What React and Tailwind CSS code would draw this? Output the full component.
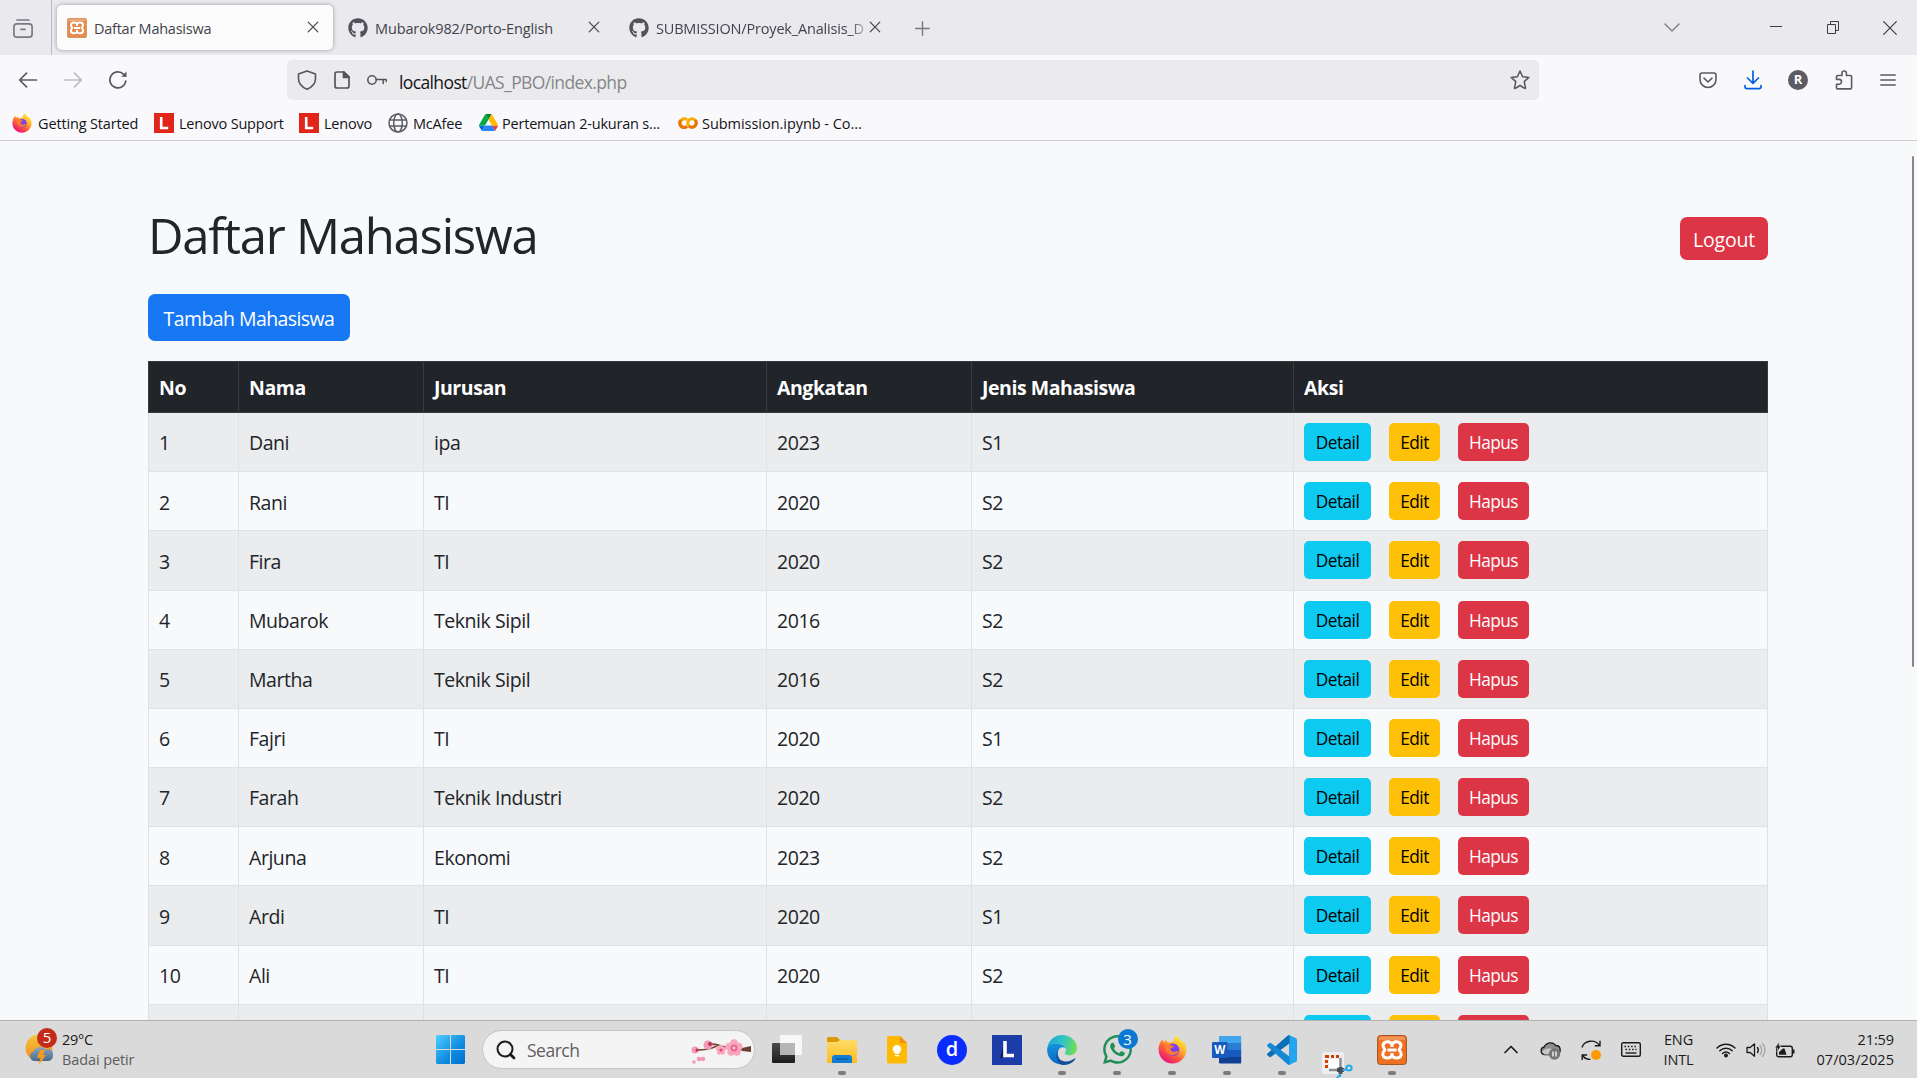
import React from "react";
import { FaGithub, FaWhatsapp } from "react-icons/fa";

const rows = [
  ["1", "Dani", "ipa", "2023", "S1"],
  ["2", "Rani", "TI", "2020", "S2"],
  ["3", "Fira", "TI", "2020", "S2"],
  ["4", "Mubarok", "Teknik Sipil", "2016", "S2"],
  ["5", "Martha", "Teknik Sipil", "2016", "S2"],
  ["6", "Fajri", "TI", "2020", "S1"],
  ["7", "Farah", "Teknik Industri", "2020", "S2"],
  ["8", "Arjuna", "Ekonomi", "2023", "S2"],
  ["9", "Ardi", "TI", "2020", "S1"],
  ["10", "Ali", "TI", "2020", "S2"],
  ["", "", "", "", ""],
];

const Line = ({ w = 20, h = 20, sw = 1.5, className = "", children }) => (
  <svg width={w} height={h} viewBox={`0 0 ${w} ${h}`} fill="none" stroke="currentColor" strokeWidth={sw} strokeLinecap="round" strokeLinejoin="round" className={`shrink-0 ${className}`}>
    {children}
  </svg>
);

const CloseX = ({ className = "" }) => (
  <Line w={12} h={12} sw={1.2} className={className}><path d="M1.200 1.200l9.600 9.600M10.800 1.200L1.200 10.800" /></Line>
);

function Xampp({ size, soft }) {
  return (
    <svg width={size} height={size} viewBox="0 0 30 30" className="shrink-0">
      <rect x=".5" y=".5" width="29" height="29" rx="3" fill={soft ? "#e58b4e" : "#ee7023"} stroke={soft ? "#c9854f" : "#a8541d"} />
      <rect x="2" y="1.5" width="26" height="3.5" rx="1.5" fill="#fff" opacity=".25" />
      <path d="M15 9.500C13.600 5.600 6.200 6 6 10.600c0 2 .9 3 2 4.200-1.300 1.200-2.200 2.400-2.200 4.400.2 4.800 7.800 5 9.200 1 1.400 4 9 3.800 9.200-1 0-2-.9-3.200-2.200-4.400 1.100-1.200 2-2.200 2-4.200-.2-4.600-7.600-5-9-1.100z" fill="none" stroke="#fff" strokeWidth="3" strokeLinejoin="round" />
      <path d="M10.500 14.900h9M15 9.500v2.500M15 18v2.500" stroke="#fff" strokeWidth="3" />
    </svg>
  );
}

function Firefox({ size, id }) {
  return (
    <svg width={size} height={size} viewBox="0 0 28 28" className="shrink-0">
      <defs>
        <linearGradient id={id} x1=".85" y1=".1" x2=".25" y2=".95">
          <stop offset="0" stopColor="#fff044" /><stop offset=".35" stopColor="#ffb02a" /><stop offset=".65" stopColor="#ff5a3c" /><stop offset="1" stopColor="#e8107c" />
        </linearGradient>
      </defs>
      <path d="M26.500 9.500c-.6-1.700-1.900-3.300-3-3.900.6 1.200.9 2.200 1 3C23.200 5 19.700 3.700 18.400.2c-2.600 1.700-3.500 4.500-3.600 6-1.300.1-2.500.5-3.500 1.100-2-.2-3-.8-3.500-2.500-.9.500-1.600 1.200-2 2-.9-.8-1.300-1.900-1.300-3C2.300 5.800.6 10 .6 14.300.6 21.600 6.600 27.600 14 27.600c7.400 0 13.400-6 13.400-13.300 0-1.700-.3-3.300-.9-4.800z" fill={`url(#${id})`} />
      <circle cx="14.500" cy="14.300" r="6" fill="#7a3ff0" />
      <path d="M6.500 9.500c2-.8 4.500-.6 6 .6 1.200.3 2.400.2 3.400.4-.6 1.600-3 1.600-3.600 2.400-.6 1.700.6 3 2.500 3.400 2 .2 3-1.400 4.800-.5-1 2.600-3.300 3.900-6 3.700-4.200-.3-7.100-4.500-7.100-10z" fill="#ff7a2e" />
    </svg>
  );
}

function GoogleDrive() {
  return (
    <svg width="19" height="17" viewBox="0 0 87.300 78" className="shrink-0">
      <path d="M6.600 66.850l3.850 6.650c.8 1.400 1.950 2.500 3.300 3.300L27.500 53H0c0 1.550.4 3.100 1.200 4.500z" fill="#0066da" />
      <path d="M43.650 25L29.900 1.200c-1.350.8-2.500 1.900-3.300 3.300l-25.400 44A9 9 0 000 53h27.500z" fill="#00ac47" />
      <path d="M73.550 76.800c1.350-.8 2.500-1.900 3.300-3.300l1.600-2.750L86.100 57.500c.8-1.400 1.200-2.950 1.200-4.500H59.800l5.850 11.500z" fill="#ea4335" />
      <path d="M43.650 25L57.400 1.200C56.050.4 54.500 0 52.900 0H34.400c-1.600 0-3.150.45-4.500 1.200z" fill="#00832d" />
      <path d="M59.800 53H27.500L13.750 76.800c1.350.8 2.900 1.200 4.500 1.200h50.800c1.600 0 3.150-.45 4.500-1.200z" fill="#2684fc" />
      <path d="M73.400 26.500l-12.700-22c-.8-1.400-1.950-2.500-3.300-3.300L43.650 25l16.150 28h27.450c0-1.550-.4-3.100-1.200-4.500z" fill="#ffba00" />
    </svg>
  );
}

const LenovoMark = () => (
  <svg width="20" height="20" viewBox="0 0 20 20" className="shrink-0">
    <rect width="20" height="20" fill="#e1251b" />
    <path d="M7.200 4v11h7" fill="none" stroke="#fff" strokeWidth="2.600" />
  </svg>
);

function Tab({ icon, title, active, className, fade }) {
  return (
    <div className={`flex h-[45px] items-center pl-2.5 pr-3.5 ${active ? "rounded-[5px] bg-[#fbfbfb] shadow-[0_0_4px_rgba(0,0,0,0.35)]" : ""} ${className}`}>
      {icon}
      <span className={`mt-[3px] ml-[7px] flex-1 whitespace-nowrap text-[#43434c] ${fade ? "text-[14.500px] tracking-[-0.180px] [mask-image:linear-gradient(to_right,black_91%,transparent_101%)]" : active ? "text-[14.500px] tracking-[-0.250px]" : "text-[14.500px] tracking-[-0.130px]"}`}>{title}</span>
      <CloseX className="mb-0.5 text-[#43434c]" />
    </div>
  );
}

function BrowserChrome() {
  return (
    <header className="shrink-0">
      <div className="flex h-[55px] items-center bg-[#eae9ee]">
        <div className="flex h-full w-[52px] items-center justify-center border-r border-[#bdbcc4] pr-1.5">
          <Line className="mt-0.5 text-[#7a7982]" sw={1.7}>
            <path d="M4 1h12M.9 7.800c0-2 1-3 3-3h12.200c2 0 3 1 3 3v7.400c0 2-1 3-3 3H3.900c-2 0-3-1-3-3zM8 10.400h4" />
          </Line>
        </div>
        <div className="flex items-center pl-[5px]">
          <Tab active className="w-[276px]" title="Daftar Mahasiswa" icon={<Xampp size={20} soft />} />
          <Tab className="ml-[5px] w-[276px]" title="Mubarok982/Porto-English" icon={<FaGithub className="size-5 text-[#52525b]" />} />
          <Tab fade className="ml-[5px] w-[276px]" title="SUBMISSION/Proyek_Analisis_D" icon={<FaGithub className="size-5 shrink-0 text-[#52525b]" />} />
        </div>
        <Line w={15} h={15} sw={1.4} className="ml-[20px] mt-0.5 text-[#7a7982]"><path d="M7.500.7v13.600M.7 7.500h13.600" /></Line>
        <div className="mr-[20px] ml-auto flex items-center text-[#3c3c43]">
          <Line w={16} h={10} sw={1.5} className="mr-[90px] text-[#85848c]"><path d="M1 1l7 7 7-7" /></Line>
          <div className="mr-[45px] mb-[3px] h-px w-3 bg-[#3c3c43]" />
          <svg width="12" height="13" viewBox="0 0 12 13" fill="none" stroke="currentColor" className="mr-[44px]"><path d="M.5 3.500h8v9h-8zM3.500 3.500v-3h8v9h-3" /></svg>
          <Line w={14} h={14} sw={1.2}><path d="M.7.7l12.600 12.600M13.300.7L.7 13.300" /></Line>
        </div>
      </div>
      <div className="flex h-[50px] items-center bg-[#f9f9fb] text-[#5b5b66]">
        <Line w={20} h={16} sw={1.7} className="ml-[18px]"><path d="M18.500 8H2M8.500 1.200L1.700 8l6.800 6.800" /></Line>
        <Line w={20} h={16} sw={1.7} className="ml-[25px] text-[#bcbcc2]"><path d="M1.500 8H18M11.500 1.200L18.300 8l-6.800 6.800" /></Line>
        <Line w={20} h={20} sw={1.7} className="ml-[25px]"><path d="M17.800 11a8 8 0 11-2.300-6.800L17.500 6" /><path d="M18.500 1.500v5.300h-5.300z" fill="currentColor" stroke="none" /></Line>
        <div className="ml-[159px] flex h-10 w-[1252px] items-center rounded-[5px] bg-[#ebebed] pr-[9px] pl-[10px] text-[#54545c]">
          <Line w={20} h={20} sw={1.6}><path d="M10 .9L1.500 4v4.500C1.500 13.500 4.500 17 10 19.200c5.500-2.200 8.500-5.700 8.500-10.700V4z" /></Line>
          <Line w={16} h={18} sw={1.7} className="ml-[17px]"><path d="M10 1H3C1.600 1 1 1.600 1 3v12c0 1.400.6 2 2 2h10c1.400 0 2-.6 2-2V6z" /><path d="M9.500.8V6.500h6z" fill="currentColor" /></Line>
          <Line w={20} h={12} sw={1.5} className="ml-[17px]"><circle cx="5" cy="6" r="4.200" /><path d="M9.200 5.500H19.200v2M16.200 5.500v4" /></Line>
          <div className="mt-1 ml-3 text-[17.500px] tracking-[-0.620px] text-[#85858a]"><span className="text-[#15141a]">localhost</span>/UAS_PBO/index.php</div>
          <Line w={20} h={20} sw={1.5} className="ml-auto"><path d="M10 1l2.600 5.700 6.200.7-4.600 4.200 1.300 6.200c.1.600-.3.900-.8.600L10 15.500l-4.700 2.900c-.5.300-.9 0-.8-.6l1.300-6.200L1.200 7.400l6.200-.7z" /></Line>
        </div>
        <div className="mr-[21px] ml-auto flex items-center">
          <Line w={18} h={17} sw={1.6}><path d="M3 1h12c1.500 0 2 .5 2 2v4.500a8 8 0 01-16 0V3c0-1.500.5-2 2-2zM5 6.200l4 3.800 4-3.800" /></Line>
          <Line w={18} h={20} sw={1.7} className="ml-[27px] text-[#0061e0]"><path d="M9 1v12M3.500 8L9 13.300 14.500 8M1 15.500v1.200c0 1.300.7 1.900 1.900 1.900h12.200c1.200 0 1.900-.6 1.900-1.900v-1.200" /></Line>
          <div className="ml-[26px] flex size-5 items-center justify-center rounded-full bg-[#5b5b66] text-[13px] font-bold text-white">R</div>
          <Line w={18} h={20} sw={1.6} className="ml-[27px]"><path d="M1.500 8.500V6.700c0-.8.400-1.200 1.200-1.200H7V3.200a2.200 2.200 0 014.400 0v2.300h4c.8 0 1.200.4 1.200 1.200v11c0 .8-.4 1.200-1.200 1.200H2.700c-.8 0-1.200-.4-1.200-1.200v-3.500h2.600a2.400 2.400 0 100-4.800H1.500z" /></Line>
          <Line w={16} h={14} sw={1.6} className="ml-[27px]"><path d="M.8 2h14.400M.8 7h14.400M.8 12h14.400" /></Line>
        </div>
      </div>
      <div className="flex h-9 items-center border-b border-[#cccccf] bg-[#f9f9fb] pl-3 text-[14.500px] tracking-[-0.200px] whitespace-nowrap text-[#15141a]">
        <div className="flex w-[142px] items-center gap-1.5"><Firefox size={20} id="ffSmall" /><span className="mt-0.5 tracking-[-0.150px]">Getting Started</span></div>
        <div className="flex w-[145px] items-center gap-[5px]"><LenovoMark /><span className="mt-0.5">Lenovo Support</span></div>
        <div className="flex w-[89px] items-center gap-[5px]"><LenovoMark /><span className="mt-0.5">Lenovo</span></div>
        <div className="flex w-[91px] items-center gap-[5px]">
          <Line w={20} h={20} sw={1.5} className="text-[#5b5b66]"><circle cx="10" cy="10" r="9" /><ellipse cx="10" cy="10" rx="4.300" ry="9" /><path d="M1.500 7h17M1.500 13h17" /></Line>
          <span className="mt-0.5">McAfee</span>
        </div>
        <div className="flex w-[199px] items-center gap-1"><GoogleDrive /><span className="mt-0.5">Pertemuan 2-ukuran s...</span></div>
        <div className="flex items-center gap-1">
          <svg width="20" height="12" viewBox="0 0 20 12" fill="none" strokeWidth="3"><circle cx="14" cy="6" r="4.200" stroke="#f9ab00" /><path d="M9 2.600A4.200 4.200 0 109 9.400" stroke="#f9ab00" /><path d="M9 9.400A4.200 4.200 0 013 3" stroke="#e8710a" /><path d="M17 3a4.200 4.200 0 01-6 6" stroke="#e8710a" /></svg>
          <span className="mt-0.5 tracking-[-0.040px]">Submission.ipynb - Co...</span>
        </div>
      </div>
    </header>
  );
}

function StudentTable() {
  return (
    <div className="mt-5 w-[1620px] text-[19.500px] tracking-[-0.450px] text-[#212529]">
      <div className="grid h-[52px] grid-cols-[89px_185px_343px_205px_322px_474px] border border-[#373b3e] bg-[#212529] font-bold text-white">
        {["No", "Nama", "Jurusan", "Angkatan", "Jenis Mahasiswa", "Aksi"].map((h, i) => (
          <div key={h} className={`flex items-center pt-0.5 pl-2.5 ${i ? "border-l border-[#373b3e]" : ""}`}>{h}</div>
        ))}
      </div>
      {rows.map((r, i) => (
        <div key={i} className={`grid h-[59.180px] grid-cols-[90px_185px_343px_205px_322px_474px] border-r border-b border-[#dee2e6] ${i % 2 ? "" : "bg-[#ebeced]"}`}>
          {r.map((c, j) => (
            <div key={j} className="flex items-center border-l border-[#dee2e6] pt-0.5 pl-2.5">{c}</div>
          ))}
          <div className="flex items-start border-l border-[#dee2e6] pt-2.5 pl-2.5 text-[17.300px] tracking-[-0.550px]">
            <button className="h-[38px] w-[67px] rounded-[5px] bg-[#0dcaf0] pt-0.5 text-black">{r[0] && "Detail"}</button>
            <button className="ml-[18px] h-[38px] w-[51px] rounded-[5px] bg-[#ffc107] pt-0.5 text-black">{r[0] && "Edit"}</button>
            <button className="ml-[18px] h-[38px] w-[71px] rounded-[5px] bg-[#dc3545] pt-0.5 text-white">{r[0] && "Hapus"}</button>
          </div>
        </div>
      ))}
    </div>
  );
}

const Slot = ({ children, dot }) => (
  <div className="relative flex h-full w-[55px] items-center justify-center">
    {children}
    {dot && <div className="absolute bottom-[3px] h-1 w-2 rounded-full bg-[#7b7b7b]" />}
  </div>
);

function Blossom() {
  const petals = (cx, cy, r) => [0, 72, 144, 216, 288].map((a) => (
    <circle key={a} cx={cx + r * Math.sin((a * Math.PI) / 180)} cy={cy - r * Math.cos((a * Math.PI) / 180)} r={r * 0.75} />
  ));
  return (
    <svg width="62" height="26" viewBox="0 0 62 26" className="mt-1 shrink-0">
      <path d="M61 10c-8 2-14 0-22-1-8-1-10-4-18-4M27 7c-6 3-10 4-20 4" fill="none" stroke="#7a4a3c" strokeWidth="1.800" />
      <path d="M52 9l9-2v6l-9-1z" fill="#6b4034" />
      <g fill="#f8a5bd">{petals(44, 9, 5)}{petals(31, 11, 3)}</g>
      <g fill="#f39ab4"><circle cx="18" cy="6" r="4.500" /><circle cx="5" cy="11" r="3.500" /><circle cx="9" cy="20" r="2.300" /><circle cx="13" cy="20" r="2.300" /><circle cx="4" cy="23" r="1.800" /></g>
      <circle cx="20" cy="5" r="2" fill="#b5304f" /><circle cx="7" cy="11" r="1.500" fill="#b5304f" />
      <circle cx="44" cy="9" r="3.500" fill="#ec6b93" /><circle cx="31" cy="11" r="1.600" fill="#e8457a" /><circle cx="44" cy="9" r="1.200" fill="#fde" />
    </svg>
  );
}

function Taskbar() {
  return (
    <footer className="flex h-[58px] shrink-0 items-center border-t border-[#b1b2b4] bg-[#dadada] text-[14.500px] tracking-[-0.100px] text-[#1b1b1b]">
      <div className="flex w-[436px] items-center pl-[25px]">
        <svg width="34" height="38" viewBox="0 0 34 38" className="mb-1.5 shrink-0">
          <defs><linearGradient id="cloud" x2="0" y2="1"><stop stopColor="#8fa6bd" /><stop offset="1" stopColor="#48698c" /></linearGradient><linearGradient id="sun" x2="0" y2="1"><stop stopColor="#f5c63a" /><stop offset="1" stopColor="#ee8a28" /></linearGradient></defs>
          <circle cx="14" cy="20" r="13.500" fill="url(#sun)" />
          <path d="M9 33a5 5 0 01-.5-9.500c2-5 9-6 12-2 5-1.500 8 1.500 7.500 6 0 3-2 5.500-5 5.500z" fill="url(#cloud)" />
          <path d="M15 22h5l-2 5h3l-7 10 1.500-7H12z" fill="#f59a1d" />
          <circle cx="22" cy="10" r="10" fill="#c42b1c" />
          <text x="22" y="15.200" textAnchor="middle" fontSize="15" fill="#fff">5</text>
        </svg>
        <div className="ml-[3px] leading-5"><div className="tracking-[-0.300px]">29°C</div><div className="text-[#5c5c5c]">Badai petir</div></div>
      </div>
      <svg width="29" height="29" viewBox="0 0 29 29" className="shrink-0">
        <defs><linearGradient id="win" x1="0" y1="0" x2="1" y2="1"><stop stopColor="#4cd0ff" /><stop offset=".6" stopColor="#0f8ae0" /><stop offset="1" stopColor="#0070d0" /></linearGradient></defs>
        <path d="M1 0h13v14H0V1zM15 0h13l1 1v13H15zM0 15h14v14H1l-1-1zM15 15h14v13l-1 1H15z" fill="url(#win)" />
      </svg>
      <div className="ml-[17px] mr-[4.500px] flex h-[39px] w-[273px] shrink-0 items-center rounded-full border border-[#c4c4c4] bg-[#f4f4f4] pr-0.5 pl-[13px]">
        <Line w={20} h={20} sw={2}><circle cx="9" cy="9" r="7.500" /><path d="M14.500 14.500l3.500 3.500" strokeWidth="2.800" /></Line>
        <span className="mt-0.5 ml-[11px] flex-1 text-[17.500px] tracking-[-0.500px] text-[#5f5f5f]">Search</span>
        <Blossom />
      </div>
      <div className="flex h-full">
        <Slot>
          <svg width="31" height="29" viewBox="0 0 31 29"><defs><linearGradient id="tv" x2="0" y2="1"><stop stopColor="#4a4a4a" /><stop offset="1" stopColor="#1d1d1d" /></linearGradient></defs><rect y="8" width="23" height="20" rx="1" fill="url(#tv)" /><rect x="8" y="0" width="22" height="20" rx="1" fill="#f7f7f7" /><path d="M8 8h15v12H8z" fill="#b5b5b5" /></svg>
        </Slot>
        <Slot dot>
          <svg width="30" height="28" viewBox="0 0 30 28"><defs><linearGradient id="fold" x2="0" y2="1"><stop stopColor="#ffdc6b" /><stop offset="1" stopColor="#fdbb1c" /></linearGradient></defs><path d="M0 2Q0 1 1 1h9l3 3h16q1 0 1 1v5H0z" fill="#d99a07" /><path d="M0 6h10l3-2h16q1 0 1 1v21q0 1-1 1H1q-1 0-1-1z" fill="url(#fold)" /><path d="M5 27v-5q0-3 3-3h14q3 0 3 3v5z" fill="#117dd2" /><path d="M9 23h12" stroke="#064f8c" /></svg>
        </Slot>
        <Slot>
          <svg width="20" height="28" viewBox="0 0 20 28"><path d="M1.500 0H13l7 7v19q0 1.500-1.500 1.500h-17Q0 27.500 0 26V1.500Q0 0 1.500 0z" fill="#ffb900" /><path d="M13 0l7 7h-7z" fill="#f58f13" /><circle cx="10" cy="13.300" r="4.200" fill="#fff" /><path d="M8 15h4v3H8zM8 19h4v1.200H8z" fill="#fff" /></svg>
        </Slot>
        <Slot><div className="flex size-[30px] items-center justify-center rounded-full bg-[#0a2cff] pb-0.5 text-[20px] font-semibold text-white">d</div></Slot>
        <Slot>
          <svg width="30" height="30" viewBox="0 0 30 30"><rect width="30" height="30" fill="#1c3ca8" /><path d="M8 24l3-12v10z" fill="#0b1f57" /><path d="M13 6v14.500h9" fill="none" stroke="#fff" strokeWidth="3.600" /></svg>
        </Slot>
        <Slot dot>
          <svg width="30" height="30" viewBox="0 0 30 30">
            <defs>
              <linearGradient id="edTop" x1="0" x2="1" y1=".3" y2=".5"><stop stopColor="#1aa6e0" /><stop offset=".5" stopColor="#2fc6c6" /><stop offset="1" stopColor="#6fe052" /></linearGradient>
              <linearGradient id="edL" x2="0" y2="1"><stop stopColor="#1292d8" /><stop offset="1" stopColor="#0c6bc4" /></linearGradient>
            </defs>
            <path d="M.3 13.500C1 5.500 7.500 0 15 0c8.500 0 15 6 15 13 0 4.500-3.500 7.300-7.500 7.300-3.300 0-4.800-1.200-4.600-2.200.2-.8 1.100-1 1.100-3.100 0-4-4-6.500-9-6.500-4.500 0-8 2-9.700 5z" fill="url(#edTop)" />
            <path d="M.2 13.500C1.500 10 5 8.500 9.500 8.500c5 0 8.500 2.500 9.300 5-4-3-8 0-8 4.500 0 5 3.500 9.500 8.700 11.300C8.500 31.500-.8 24 .2 13.500z" fill="url(#edL)" />
            <path d="M12.500 13.500c-3.500 3-3.200 11.500 4.500 12.700 4.500.8 8-1 10.500-2.700.7-.5 1.200 0 .8.600-2.300 3.700-6.800 6-11.800 5.900C9 29.500 7 17 12.500 13.500z" fill="#124f96" />
          </svg>
        </Slot>
        <Slot dot>
          <FaWhatsapp className="size-[33px] text-[#1f8f56]" />
          <div className="absolute top-[8px] left-[28px] flex size-5 items-center justify-center rounded-full bg-[#0a78d4] text-[15px] text-white">3</div>
        </Slot>
        <Slot dot><Firefox size={29} id="ffBig" /></Slot>
        <Slot dot>
          <svg width="30" height="28" viewBox="0 0 30 28"><path d="M8 0h20.500q.7 0 .7.700V7H7V1q0-1 1-1z" fill="#41a5ee" /><path d="M7 7h22.200v7H7z" fill="#2b7cd3" /><path d="M7 14h22.200v7H7z" fill="#185abd" /><path d="M7 21h22.200v5.500q0 1-1 1H8q-1 0-1-1z" fill="#103f91" /><rect y="6" width="15.500" height="16" rx="1" fill="#185abd" /><text x="7.700" y="18.200" textAnchor="middle" fontSize="11.500" fontWeight="700" fill="#fff" letterSpacing="0">W</text></svg>
        </Slot>
        <Slot dot>
          <svg width="30" height="30" viewBox="0 0 30 30"><path d="M22 0l7 3.200q1 .5 1 1.600v20.400q0 1.100-1 1.600L22 30z" fill="#25a4f0" /><path d="M22.500 0v8.500L3.800 22q-.7.500-1.300 0L.4 20.200q-.8-.8 0-1.600L20.500.8q1-.9 2-.8z" fill="#0b70b8" /><path d="M22.500 30v-8.500L3.800 8q-.7-.5-1.300 0L.4 9.800q-.8.800 0 1.600l20.100 17.800q1 .9 2 .8z" fill="#1488d2" /></svg>
        </Slot>
        <Slot>
          <svg width="32" height="27" viewBox="0 0 32 27" className="absolute bottom-0 left-[12px] overflow-hidden">
            <rect x="0" y="1" width="22" height="22" rx="2" fill="#eceef0" />
            <rect x="7" y="8" width="11" height="10" fill="#fff" />
            <g fill="#d83b01"><path d="M3 4h4v3H3zM9 4h3v3H9zM14 4h3v3h-3zM3 9h3v3H3zM3 14h3v3H3z" /></g>
            <path d="M18.500 7v13M7 19h13" stroke="#8b8f94" strokeWidth="2.500" />
            <path d="M15 19h7M18.500 16v7" stroke="#4a4d50" strokeWidth="4" />
            <g stroke="#28a8ea" strokeWidth="2" fill="none"><circle cx="27" cy="17" r="2.600" /><path d="M24.500 18l-4 1.500M18 22.500V26M15 27a3 3 0 013-2" /></g>
          </svg>
        </Slot>
        <Slot dot><Xampp size={30} /></Slot>
      </div>
      <div className="mr-[23px] ml-auto flex items-center">
        <Line w={14} h={9} sw={1.7} className="mr-[22px]"><path d="M1 7.500l6-6 6 6" /></Line>
        <svg width="21" height="20" viewBox="0 0 21 20" className="mr-[20px]"><path d="M4.500 14.500a3.800 3.800 0 01-.3-7.500c2-5 9-5.500 11.500-1.500 3 0 4.500 2 4.500 4.500 0 2-1 4.500-4 4.500z" fill="#8d8d8d" stroke="#1b1b1b" strokeWidth="1.300" /><path d="M2 12c3-4 9-5 18 0l-4 2.500H4.500z" fill="#c9c9c9" /><circle cx="14.500" cy="14" r="5.700" fill="#767676" /><path d="M13 11.500v5M16 11.500v5" stroke="#fff" strokeWidth="1.300" /></svg>
        <svg width="20" height="20" viewBox="0 0 20 20" fill="none" stroke="#1b1b1b" strokeWidth="1.400" className="mr-[20px]"><path d="M1 7.500C3 .5 14-1.500 18.500 5.500M19 .8v5h-5.200M1.200 20v-5h5M1.500 15.500c2 3 5 4 8 4" /><circle cx="15" cy="15" r="5" fill="#ff9a05" stroke="none" /></svg>
        <svg width="20" height="15" viewBox="0 0 20 15" fill="none" stroke="#1b1b1b" strokeWidth="1.400" className="mr-[22px]"><rect x=".7" y=".7" width="18.600" height="13.600" rx="1.500" /><path d="M3.500 4.500h13M4.500 7.500h11" strokeDasharray="1.500 1.800" /><path d="M4.500 11h11" /></svg>
        <div className="mr-[22px] w-[31px] text-center leading-5"><div>ENG</div><div>INTL</div></div>
        <Line w={20} h={16} sw={1.5} className="mr-[10px]"><path d="M1 6a12.500 12.500 0 0118 0M3.800 8.800a8.700 8.700 0 0112.400 0M6.600 11.500a4.800 4.800 0 016.800 0" /><circle cx="10" cy="13.500" r="1.200" fill="currentColor" /></Line>
        <Line w={20} h={16} sw={1.3} className="mr-[9px]"><path d="M1 5.500v5h3.200l4.300 3.700V1.800L4.200 5.500zM11.500 5.500q1.800 2.500 0 5" /><path d="M14 3.500q3.500 4.500 0 9M16.500 1.500q5 6.500 0 13" stroke="#a5a5a5" /></Line>
        <svg width="20" height="16" viewBox="0 0 20 16" className="mr-[21px]"><rect x="1.700" y="4.200" width="15.600" height="10.600" rx="2" fill="none" stroke="#1b1b1b" strokeWidth="1.400" /><path d="M18 7.500h1.500v4H18zM4 12.700h7.500l-2-6.200H8L4 10z" fill="#1b1b1b" /><path d="M4 0L0 6h2.500L2 10l4-6H4z" fill="#1b1b1b" stroke="#dadada" strokeWidth=".5" /></svg>
        <div className="w-[78px] text-right leading-5 whitespace-nowrap"><div>21:59</div><div className="tracking-[0.060px]">07/03/2025</div></div>
      </div>
    </footer>
  );
}

export default function App() {
  return (
    <div className="flex h-[1078px] w-[1917px] flex-col overflow-hidden bg-[#f8f9fb] font-['Open_Sans','Noto_Sans',sans-serif]">
      <BrowserChrome />
      <main className="flex min-h-0 flex-1 justify-between overflow-hidden pl-[148px]">
        <div className="pt-[60px]">
          <div className="flex h-[73px] w-[1620px] items-start justify-between">
            <h1 className="mt-[4px] text-[49px] leading-[60px] tracking-[-1.250px] text-[#212529]">Daftar Mahasiswa</h1>
            <button className="mt-4 h-[43px] w-[88px] rounded-[7px] bg-[#dc3545] pt-[3px] text-[19.500px] tracking-[-0.200px] text-white">Logout</button>
          </div>
          <button className="mt-5 block h-[47px] w-[202px] rounded-[7px] bg-[#1877f2] pt-[3px] text-[19.500px] tracking-[-0.580px] text-white">Tambah Mahasiswa</button>
          <StudentTable />
        </div>
        <div className="mt-[15px] mr-[3px] h-[511px] w-0.5 rounded bg-[#86868b]" />
      </main>
      <Taskbar />
    </div>
  );
}
